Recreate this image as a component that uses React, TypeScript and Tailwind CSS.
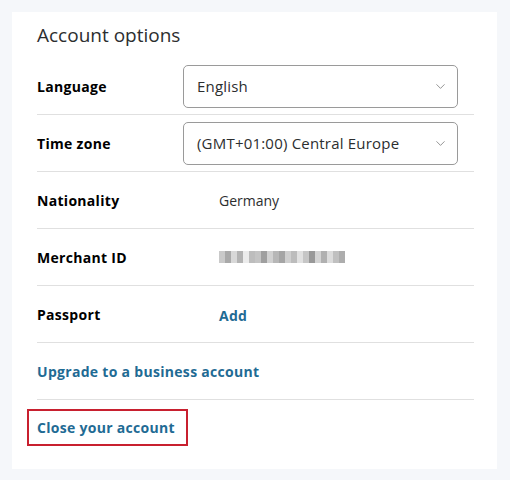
import { ChevronDown } from 'lucide-react';

const rows = [
  { label: 'Nationality', value: 'Germany' },
];

function Select({ value }: { value: string }) {
  return (
    <div className="flex h-[43px] w-[275px] items-center justify-between rounded-[5px] border border-[#9a9a9a] pl-[13px] pr-[9px] text-[15px] tracking-[0.2px] text-[#2c2e2f]">
      <span>{value}</span>
      <ChevronDown size={15} strokeWidth={1} className="text-[#555]" />
    </div>
  );
}

export default function App() {
  return (
    <div className="min-h-[480px] bg-[#f5f7fa] p-[12px] pr-[13px] pb-[10px] font-['Open_Sans',sans-serif]">
      <div className="bg-white pl-[25px] pr-[23px] pt-[11px] pb-[23px]">
        <h2 className="text-[19px] leading-[24px] text-[#2c2e2f] mb-[11px]">Account options</h2>

        <div className="flex h-[57px] items-center border-b border-[#e0e0e0]">
          <span className="w-[146px] text-[14px] font-bold tracking-[0.3px] text-black">Language</span>
          <Select value="English" />
        </div>
        <div className="flex h-[57px] items-center border-b border-[#e0e0e0]">
          <span className="w-[146px] text-[14px] font-bold tracking-[0.3px] text-black">Time zone</span>
          <Select value="(GMT+01:00) Central Europe" />
        </div>
        {rows.map((r) => (
          <div key={r.label} className="flex h-[57px] items-center border-b border-[#e0e0e0]">
            <span className="w-[182px] text-[14px] font-bold tracking-[0.3px] text-black">{r.label}</span>
            <span className="text-[14px] text-[#2c2e2f]">{r.value}</span>
          </div>
        ))}
        <div className="flex h-[57px] items-center border-b border-[#e0e0e0]">
          <span className="w-[182px] text-[14px] font-bold tracking-[0.3px] text-black">Merchant ID</span>
          <div className="flex h-[12px]">
            {['#c9c9c9', '#a9a9a9', '#d8d8d8', '#b3b3b3', '#ececec', '#bdbdbd', '#c4c4c4', '#9f9f9f', '#d1d1d1', '#b7b7b7', '#a5a5a5', '#cfcfcf', '#bcbcbc', '#e1e1e1', '#c6c6c6', '#989898', '#d3d3d3', '#b0b0b0', '#dcdcdc', '#c0c0c0', '#adadad'].map((c, i) => (
              <div key={i} className="h-full w-[6px]" style={{ backgroundColor: c }} />
            ))}
          </div>
        </div>
        <div className="flex h-[57px] items-center border-b border-[#e0e0e0]">
          <span className="w-[182px] text-[14px] font-bold tracking-[0.3px] text-black">Passport</span>
          <a className="text-[14px] font-bold tracking-[0.3px] text-[#1f6b94] pt-[2px]">Add</a>
        </div>
        <div className="flex h-[57px] items-center border-b border-[#e0e0e0]">
          <a className="text-[14px] font-bold tracking-[0.3px] text-[#1f6b94]">Upgrade to a business account</a>
        </div>
        <div className="pt-[9px]">
          <a className="-ml-[10px] inline-flex h-[37px] items-center border-2 border-[#c8202f] pl-[8px] pr-[11px] text-[14px] font-bold tracking-[0.3px] text-[#1f6b94]">
            Close your account
          </a>
        </div>
      </div>
    </div>
  );
}
